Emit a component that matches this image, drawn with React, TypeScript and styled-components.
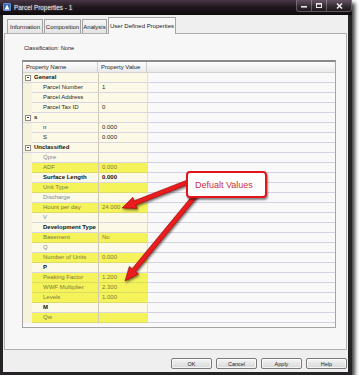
import React from "react";
import styled, { createGlobalStyle } from "styled-components";

type Tone = "normal" | "muted" | "bold";

type Entry = {
  label: string;
  value?: string;
  group?: boolean;
  tone?: Tone;
  mark?: boolean;
};

const entries: Entry[] = [
  { label: "General", group: true },
  { label: "Parcel Number", value: "1" },
  { label: "Parcel Address" },
  { label: "Parcel Tax ID", value: "0" },
  { label: "s", group: true },
  { label: "n", value: "0.000" },
  { label: "S", value: "0.000" },
  { label: "Unclassified", group: true },
  { label: "Qpre", tone: "muted" },
  { label: "ADF", value: "0.000", mark: true },
  { label: "Surface Length", value: "0.000", tone: "bold" },
  { label: "Unit Type", mark: true },
  { label: "Discharge", tone: "muted" },
  { label: "Hours per day", value: "24.000", mark: true },
  { label: "V", tone: "muted" },
  { label: "Development Type", tone: "bold" },
  { label: "Basement", value: "No", mark: true },
  { label: "Q", tone: "muted" },
  { label: "Number of Units", value: "0.000", mark: true },
  { label: "P", tone: "bold" },
  { label: "Peaking Factor", value: "1.200", mark: true },
  { label: "WWF Multiplier", value: "2.300", mark: true },
  { label: "Levels", value: "1.000", mark: true },
  { label: "M", tone: "bold" },
  { label: "Qw", mark: true },
];

const tabs = [
  { label: "Information", w: 36 },
  { label: "Composition", w: 37 },
  { label: "Analysis", w: 25 },
  { label: "User Defined Properties", w: 68, active: true },
];

const buttons = ["OK", "Cancel", "Apply", "Help"];

// polygon for a fat arrow from tail to tip
function arrowPoints(tx: number, ty: number, hx: number, hy: number) {
  const shaft = 4.6;
  const headL = 14;
  const headW = 12;
  const dx = hx - tx;
  const dy = hy - ty;
  const len = Math.hypot(dx, dy);
  const ux = dx / len;
  const uy = dy / len;
  const px = -uy;
  const py = ux;
  const bx = hx - ux * headL;
  const by = hy - uy * headL;
  const pts = [
    [tx + (px * shaft) / 2, ty + (py * shaft) / 2],
    [bx + (px * shaft) / 2, by + (py * shaft) / 2],
    [bx + (px * headW) / 2, by + (py * headW) / 2],
    [hx, hy],
    [bx - (px * headW) / 2, by - (py * headW) / 2],
    [bx - (px * shaft) / 2, by - (py * shaft) / 2],
    [tx - (px * shaft) / 2, ty - (py * shaft) / 2],
  ];
  return pts.map((p) => p.map((n) => n.toFixed(1)).join(",")).join(" ");
}

export default function App() {
  return (
    <>
      <GlobalStyle />
      <Window>
        <TitleBar>
          <AppIcon width="8" height="8" viewBox="0 0 8 8">
            <rect x="0" y="0" width="8" height="8" rx="1" fill="#2f63b4" />
            <rect x="0.5" y="0.5" width="7" height="7" rx="0.8" fill="none" stroke="#8fb4ea" strokeWidth="0.6" />
            <path d="M4 1.5 L6.5 6.5 L1.5 6.5 Z" fill="#ffffff" />
          </AppIcon>
          <TitleText>Parcel Properties - 1</TitleText>
          <Controls>
            <CtrlButton $w={15}>
              <svg width="6" height="5" viewBox="0 0 6 5">
                <rect x="0" y="3" width="6" height="1.6" fill="#e8e8e8" />
              </svg>
            </CtrlButton>
            <CtrlButton $w={15}>
              <svg width="6" height="5" viewBox="0 0 6 5">
                <rect x="0.5" y="0.5" width="5" height="4" fill="none" stroke="#e8e8e8" strokeWidth="1" />
                <rect x="0" y="0" width="6" height="1.6" fill="#e8e8e8" />
              </svg>
            </CtrlButton>
            <CtrlButton $w={24} $last>
              <svg width="7" height="6" viewBox="0 0 7 6">
                <path d="M1 0.5 L6 5.5 M6 0.5 L1 5.5" stroke="#f0f0f0" strokeWidth="1.5" />
              </svg>
            </CtrlButton>
          </Controls>
        </TitleBar>
        <Frame>
          <TabStrip>
            {tabs.map((t) => (
              <Tab key={t.label} $w={t.w} $active={t.active}>
                {t.label}
              </Tab>
            ))}
          </TabStrip>
          <TabPanel>
            <Classification>Classification: None</Classification>
            <Grid>
              <HeaderRow>
                <HeaderCell $span>Property Name</HeaderCell>
                <HeaderCell>Property Value</HeaderCell>
                <HeaderCell $fill />
              </HeaderRow>
              <Rows>
                {entries.map((e) =>
                  e.group ? (
                    <Row key={e.label}>
                      <Gutter $group>
                        <Expander />
                      </Gutter>
                      <NameCell $tone="bold" $group>
                        {e.label}
                      </NameCell>
                      <ValueCell />
                      <FillCell />
                    </Row>
                  ) : (
                    <Row key={e.label}>
                      <Gutter />
                      <NameCell $tone={e.tone} $mark={e.mark}>
                        {e.label}
                      </NameCell>
                      <ValueCell $tone={e.tone} $mark={e.mark}>
                        {e.value}
                      </ValueCell>
                      <FillCell />
                    </Row>
                  )
                )}
              </Rows>
            </Grid>
          </TabPanel>
          <ButtonBar>
            {buttons.map((b) => (
              <DialogButton key={b}>{b}</DialogButton>
            ))}
          </ButtonBar>
        </Frame>

        <Arrows width="359" height="381" viewBox="0 0 359 381">
          <defs>
            <filter id="shade" x="-20%" y="-20%" width="140%" height="140%">
              <feDropShadow dx="1" dy="1.5" stdDeviation="0.8" floodColor="#000" floodOpacity="0.55" />
            </filter>
          </defs>
          <g filter="url(#shade)" fill="#ea1a1f" stroke="#8a0a0a" strokeWidth="0.6" strokeLinejoin="round">
            <polygon points={arrowPoints(196, 179, 122, 208)} />
            <polygon points={arrowPoints(200, 190, 125, 281)} />
          </g>
        </Arrows>
        <Callout>Defualt Values</Callout>
      </Window>
    </>
  );
}

const GlobalStyle = createGlobalStyle`
  html, body {
    margin: 0;
    padding: 0;
    background: #ffffff;
  }
  body {
    font-family: "Liberation Sans", Arial, sans-serif;
    font-size: 6px;
    color: #222;
  }
  * {
    box-sizing: border-box;
  }
`;

const Window = styled.div`
  position: relative;
  width: 352px;
  height: 375px;
  display: flex;
  flex-direction: column;
  background: #262326;
  box-shadow: 3px 3px 4px rgba(0, 0, 0, 0.75);
`;

const TitleBar = styled.div`
  height: 15px;
  display: flex;
  align-items: flex-start;
  padding-left: 3px;
  background: linear-gradient(180deg, #4a3646 0%, #221820 45%, #0d0a0d 100%);
`;

const AppIcon = styled.svg`
  margin-top: 3px;
  flex: none;
`;

const TitleText = styled.div`
  margin-left: 3px;
  line-height: 15px;
  font-size: 6.4px;
  color: #f2ecf2;
  text-shadow: 0 0 3px rgba(255, 255, 255, 0.55);
`;

const Controls = styled.div`
  margin-left: auto;
  margin-right: 0;
  display: flex;
  height: 12px;
  border: 1px solid rgba(255, 255, 255, 0.3);
  border-top: none;
  border-radius: 0 0 3px 3px;
  overflow: hidden;
`;

const CtrlButton = styled.div<{ $w: number; $last?: boolean }>`
  width: ${(p) => p.$w}px;
  display: flex;
  align-items: center;
  justify-content: center;
  background: linear-gradient(180deg, rgba(255, 255, 255, 0.14), rgba(255, 255, 255, 0.03));
  border-right: ${(p) => (p.$last ? "none" : "1px solid rgba(255,255,255,0.28)")};
`;

const Frame = styled.div`
  flex: 1;
  display: flex;
  flex-direction: column;
  margin: 0 4px 3px 3px;
  background: #efefef;
`;

const TabStrip = styled.div`
  position: relative;
  z-index: 1;
  height: 18px;
  display: flex;
  align-items: flex-end;
  gap: 1px;
  padding-left: 4px;
`;

const Tab = styled.div<{ $w: number; $active?: boolean }>`
  width: ${(p) => p.$w}px;
  height: ${(p) => (p.$active ? 17 : 14)}px;
  margin-bottom: ${(p) => (p.$active ? -1 : 0)}px;
  display: flex;
  align-items: center;
  justify-content: center;
  white-space: nowrap;
  font-size: 6px;
  color: #1a1a1a;
  border: 1px solid #a3a3a3;
  border-bottom: none;
  border-radius: 1px 1px 0 0;
  background: ${(p) =>
    p.$active ? "#f7f7f7" : "linear-gradient(180deg, #f4f4f4 0%, #e4e4e4 100%)"};
`;

const TabPanel = styled.div`
  flex: 1;
  margin: 0 1px;
  display: flex;
  flex-direction: column;
  padding: 10px 0 0 17px;
  border: 1px solid #b1b1b1;
  background: #f7f7f7;
`;

const Classification = styled.div`
  padding-left: 2px;
  line-height: 8px;
  font-size: 5.7px;
  color: #222;
`;

const Grid = styled.div`
  margin-top: 8px;
  width: 314px;
  height: 268px;
  display: flex;
  flex-direction: column;
  border: 1px solid #a4a4a4;
  border-top: 2px solid #8a8a8a;
  background: #f9f9f9;
  overflow: hidden;
`;

const cols = "9px 66px 49px 1fr";

const HeaderRow = styled.div`
  height: 11px;
  display: grid;
  grid-template-columns: ${cols};
  background: linear-gradient(180deg, #fdfdfd 0%, #eaeaea 100%);
  border-bottom: 1px solid #d2d2d2;
`;

const HeaderCell = styled.div<{ $span?: boolean; $fill?: boolean }>`
  grid-column: ${(p) => (p.$span ? "span 2" : "auto")};
  padding-left: 3px;
  line-height: 10px;
  font-size: 6px;
  color: #1e1e1e;
  white-space: nowrap;
  border-right: ${(p) => (p.$fill ? "none" : "1px solid #d0d0d0")};
`;

const Rows = styled.div`
  flex: 1;
  display: flex;
  flex-direction: column;
`;

const Row = styled.div`
  height: 10px;
  flex: none;
  display: grid;
  grid-template-columns: ${cols};
`;

const toneColor = (tone?: Tone, mark?: boolean) => {
  if (mark) return "#807c3c";
  if (tone === "muted") return "#878787";
  if (tone === "bold") return "#111111";
  return "#262626";
};

const Gutter = styled.div<{ $group?: boolean }>`
  display: flex;
  align-items: center;
  justify-content: center;
  background: #f6f3dc;
  border-bottom: ${(p) => (p.$group ? "1px solid #d9d5e2" : "1px solid #f6f3dc")};
`;

const Expander = styled.span`
  position: relative;
  width: 6px;
  height: 6px;
  border: 1px solid #8c8c8c;
  background: #fbfbf6;
  &::after {
    content: "";
    position: absolute;
    left: 1px;
    right: 1px;
    top: 1.5px;
    height: 1px;
    background: #444;
  }
`;

const NameCell = styled.div<{ $tone?: Tone; $mark?: boolean; $group?: boolean }>`
  padding-left: ${(p) => (p.$group ? 2 : 11)}px;
  line-height: 9px;
  font-size: 6px;
  white-space: nowrap;
  overflow: visible;
  font-weight: ${(p) => (p.$tone === "bold" ? 700 : 400)};
  color: ${(p) => toneColor(p.$tone, p.$mark)};
  background: ${(p) => (p.$mark ? "#f4f35a" : "#fcfae7")};
  border-bottom: 1px solid ${(p) => (p.$mark ? "#dedb62" : "#d9d5e2")};
`;

const ValueCell = styled.div<{ $tone?: Tone; $mark?: boolean }>`
  padding-left: 3px;
  line-height: 9px;
  font-size: 6px;
  white-space: nowrap;
  font-weight: ${(p) => (p.$tone === "bold" ? 700 : 400)};
  color: ${(p) => toneColor(p.$tone, p.$mark)};
  background: ${(p) => (p.$mark ? "#f4f35a" : "#fcfae7")};
  border-left: 1px solid #cdc9b4;
  border-bottom: 1px solid ${(p) => (p.$mark ? "#dedb62" : "#d9d5e2")};
`;

const FillCell = styled.div`
  background: #f9f9f9;
  border-left: 1px solid #e2dfd2;
  border-bottom: 1px solid #d4d1e0;
`;

const ButtonBar = styled.div`
  height: 22px;
  flex: none;
  display: flex;
  justify-content: flex-end;
  align-items: flex-start;
  gap: 4px;
  padding: 8px 1px 0 0;
`;

const DialogButton = styled.div`
  width: 41px;
  height: 11px;
  display: flex;
  align-items: center;
  justify-content: center;
  font-size: 5.5px;
  color: #222;
  border: 1px solid #7a7a7a;
  border-radius: 2px;
  background: linear-gradient(180deg, #f6f6f6 0%, #e6e6e6 50%, #d8d8d8 100%);
  box-shadow: inset 0 0 0 1px rgba(255, 255, 255, 0.7);
`;

const Arrows = styled.svg`
  position: absolute;
  left: 0;
  top: 0;
  pointer-events: none;
  overflow: visible;
`;

const Callout = styled.div`
  position: absolute;
  left: 186px;
  top: 171px;
  width: 81px;
  height: 27px;
  display: flex;
  align-items: center;
  padding-left: 7px;
  font-size: 9px;
  color: #c9303a;
  white-space: nowrap;
  background: #ffffff;
  border: 2.5px solid #e4141b;
  border-radius: 4px;
  box-shadow: 1px 2px 2px rgba(0, 0, 0, 0.45);
`;
